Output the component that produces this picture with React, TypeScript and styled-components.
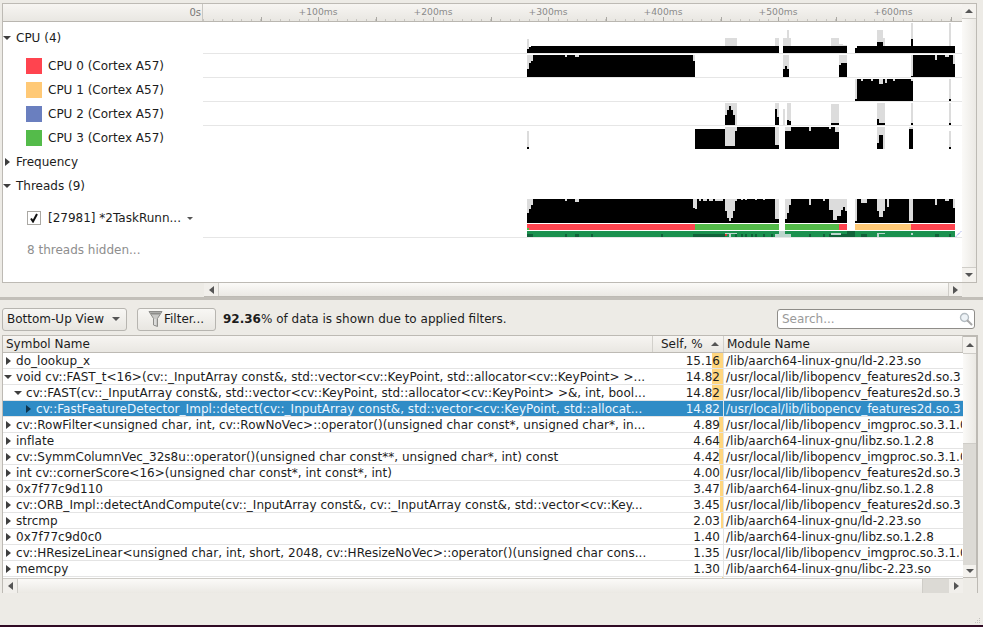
import React from "react";
import styled, { createGlobalStyle } from "styled-components";

type Shape = [string, number, number, number, number];

const GRAY = "#dcdcdc";
const BLACK = "#000";
const RED = "#ff444f";
const GREEN = "#54bb4a";
const ORANGE = "#ffc976";
const BLUE = "#6a7fbf";
const STRIP = "#1b914f";
const DARK = "#11633a";
const PALE = "#bcd6cd";

const GlobalStyle = createGlobalStyle`
  html, body {
    margin: 0;
    padding: 0;
    background: #edebe6;
  }
  * {
    box-sizing: border-box;
  }
`;

const Page = styled.div`
  position: relative;
  width: 983px;
  height: 627px;
  overflow: hidden;
  background: #edebe6;
  color: #1c1c1c;
  font-family: "DejaVu Sans", sans-serif;
  font-size: 12px;
  display: flex;
  flex-direction: column;
  padding-top: 3px;
`;

const TopPane = styled.div`
  display: flex;
  height: 280px;
  padding: 0 6px 0 2px;
`;

const TimelineFrame = styled.div`
  width: 961px;
  border: 1px solid #bdbab4;
  border-right: none;
  background: #fff;
  display: flex;
  flex-direction: column;
`;

const RulerRow = styled.div`
  display: flex;
  height: 18px;
  flex: none;
  background: linear-gradient(#f7f5f2, #e9e7e2);
  border-bottom: 1px solid #b9b6b0;
`;

const RulerLabel = styled.div`
  width: 200px;
  border-right: 1px solid #c9c7c2;
  text-align: right;
  padding: 3px 1px 0 0;
  font-size: 10px;
  color: #777;
`;

const Track = styled.div<{ $height: number }>`
  display: flex;
  height: ${(p) => p.$height}px;
  flex: none;
`;

const TrackLabel = styled.div<{ $indent?: number; $muted?: boolean }>`
  width: 200px;
  flex: none;
  display: flex;
  align-items: center;
  gap: 6px;
  padding-left: ${(p) => p.$indent ?? 0}px;
  color: ${(p) => (p.$muted ? "#8e8e8e" : "#1c1c1c")};
  white-space: nowrap;
`;

const TrackChart = styled.div<{ $line?: boolean }>`
  flex: 1;
  border-bottom: ${(p) => (p.$line ? "1px solid #e6e6e6" : "none")};
  svg {
    display: block;
  }
`;

const Swatch = styled.span<{ $color: string }>`
  width: 16px;
  height: 16px;
  margin-left: 1px;
  background: ${(p) => p.$color};
`;

const Arrow = styled.span<{ $dir: "right" | "down" | "up" | "left"; $size?: number; $color?: string }>`
  display: inline-block;
  flex: none;
  width: 0;
  height: 0;
  ${(p) => {
    const s = p.$size ?? 4;
    const c = p.$color ?? "#3e3e3e";
    if (p.$dir === "right") return `border-top: ${s}px solid transparent; border-bottom: ${s}px solid transparent; border-left: ${s + 1}px solid ${c};`;
    if (p.$dir === "left") return `border-top: ${s}px solid transparent; border-bottom: ${s}px solid transparent; border-right: ${s + 1}px solid ${c};`;
    if (p.$dir === "up") return `border-left: ${s}px solid transparent; border-right: ${s}px solid transparent; border-bottom: ${s}px solid ${c};`;
    return `border-left: ${s}px solid transparent; border-right: ${s}px solid transparent; border-top: ${s}px solid ${c};`;
  }}
`;

const GroupToggle = styled.span`
  width: 8px;
  height: 9px;
  margin-right: -1px;
  display: flex;
  align-items: center;
  justify-content: center;
`;

const CheckBox = styled.span`
  width: 14px;
  height: 14px;
  border: 1px solid #aaa8a3;
  background: #fff;
  display: flex;
  align-items: center;
  justify-content: center;
`;

const ThreadName = styled.span`
  display: flex;
  align-items: center;
  gap: 6px;
  margin-left: 1px;
`;

const VScroll = styled.div<{ $width?: number }>`
  width: ${(p) => p.$width ?? 15}px;
  flex: none;
  display: flex;
  flex-direction: column;
  background: #dcdad5;
  border: 1px solid #bdbab4;
  border-left: none;
`;

const VButton = styled.div<{ $height: number }>`
  height: ${(p) => p.$height}px;
  flex: none;
  display: flex;
  align-items: center;
  justify-content: center;
  background: #f4f2ee;
`;

const VThumb = styled.div<{ $height?: number }>`
  ${(p) => (p.$height ? `height: ${p.$height}px; flex: none;` : "flex: 1;")}
  background: linear-gradient(90deg, #fbfaf8, #ebe9e4);
  border-top: 1px solid #cfcdc8;
  border-bottom: 1px solid #cfcdc8;
`;

const VTrough = styled.div`
  flex: 1;
  background: #dcdad5;
`;

const HScrollRow = styled.div`
  display: flex;
  height: 14px;
  flex: none;
  padding: 0 21px 0 204px;
`;

const HScroll = styled.div`
  display: flex;
  flex: 1;
  background: #dcdad5;
  border-bottom: 1px solid #bdbab4;
`;

const HButton = styled.div<{ $width: number }>`
  width: ${(p) => p.$width}px;
  flex: none;
  display: flex;
  align-items: center;
  justify-content: center;
  background: #f1efeb;
`;

const HThumb = styled.div<{ $width?: number }>`
  ${(p) => (p.$width ? `width: ${p.$width}px; flex: none;` : "flex: 1;")}
  background: linear-gradient(#fbfaf8, #ebe9e4);
  border-left: 1px solid #cfcdc8;
  border-right: 1px solid #cfcdc8;
`;

const HTrough = styled.div`
  flex: 1;
  background: #dcdad5;
`;

const Splitter = styled.div`
  height: 3px;
  flex: none;
  background: #c2bfb9;
`;

const Toolbar = styled.div`
  display: flex;
  align-items: center;
  height: 35px;
  flex: none;
  padding: 3px 8px 0 2px;
`;

const ToolButton = styled.div<{ $width: number }>`
  width: ${(p) => p.$width}px;
  height: 23px;
  flex: none;
  display: flex;
  align-items: center;
  border: 1px solid #b7b5b0;
  border-radius: 3px;
  background: linear-gradient(#f8f7f4, #e8e6e1);
`;

const ComboButton = styled(ToolButton)`
  justify-content: space-between;
  padding: 0 6px 0 4px;
  margin-right: 10px;
`;

const FilterButton = styled(ToolButton)`
  padding-left: 9px;
  margin-right: 7px;
`;

const Status = styled.span`
  flex: 1;
  white-space: nowrap;
  b {
    font-weight: bold;
  }
`;

const SearchBox = styled.div`
  width: 198px;
  height: 20px;
  flex: none;
  display: flex;
  align-items: center;
  justify-content: space-between;
  padding: 0 1px 0 4px;
  background: #fff;
  border: 1px solid #8f8d89;
  border-radius: 3px;
  color: #9a9a9a;
`;

const TableFrame = styled.div`
  display: flex;
  flex-direction: column;
  width: 976px;
  height: 258px;
  flex: none;
  margin-left: 2px;
  border: 1px solid #bdbab4;
  background: #fff;
`;

const TableMain = styled.div`
  display: flex;
  height: 242px;
  flex: none;
`;

const TableColumn = styled.div`
  width: 960px;
  flex: none;
  overflow: hidden;
`;

const HeaderRow = styled.div`
  display: grid;
  grid-template-columns: 650px 71px 239px;
  height: 17px;
  background: linear-gradient(#f7f5f2, #e9e7e2);
  border-bottom: 1px solid #bdbab4;
`;

const HeaderCell = styled.div<{ $sorted?: boolean }>`
  display: flex;
  align-items: center;
  justify-content: ${(p) => (p.$sorted ? "space-between" : "flex-start")};
  padding: 0 ${(p) => (p.$sorted ? "4px" : "2px")} 0 ${(p) => (p.$sorted ? "8px" : "3px")};
  border-right: 1px solid #d2d0cb;
  white-space: nowrap;
`;

const Row = styled.div<{ $selected?: boolean }>`
  display: grid;
  grid-template-columns: 650px 71px 239px;
  height: 16px;
  border-bottom: 1px solid #e4e4e4;
  background: ${(p) => (p.$selected ? "#308cc6" : "#fff")};
  color: ${(p) => (p.$selected ? "#eaf5ff" : "#1c1c1c")};
`;

const NameCell = styled.div<{ $depth: number }>`
  display: flex;
  align-items: center;
  padding-left: ${(p) => p.$depth * 10}px;
  letter-spacing: 0.03px;
  white-space: nowrap;
  overflow: hidden;
`;

const RowToggle = styled.span`
  width: 10px;
  margin-right: 3px;
  flex: none;
  display: flex;
  align-items: center;
  justify-content: center;
`;

const SelfCell = styled.div`
  position: relative;
  display: flex;
  align-items: center;
  justify-content: flex-end;
  padding-right: 3px;
  border-right: 1px solid #e4e4e4;
`;

const SelfBar = styled.span`
  position: absolute;
  right: 0;
  top: 0;
  bottom: 0;
  background: #ffd67f;
`;

const SelfValue = styled.span`
  position: relative;
`;

const ModuleCell = styled.div`
  display: flex;
  align-items: center;
  padding-left: 2px;
  margin-right: 1px;
  white-space: nowrap;
  overflow: hidden;
`;

const TableScrollRow = styled.div`
  display: flex;
  height: 15px;
  flex: none;
  background: #edebe6;
`;

const TableHScroll = styled.div`
  width: 960px;
  display: flex;
  flex: none;
  background: #f4f2ee;
  border-top: 1px solid #cfcdc8;
`;

const Grip = styled.svg`
  position: absolute;
  right: 2px;
  bottom: 3px;
`;

const DesktopEdge = styled.div`
  position: absolute;
  left: 0;
  right: 0;
  bottom: 0;
  height: 2px;
  background: #300a24;
`;

const k = (x1: number, x2: number, y1: number, y2: number): Shape => [BLACK, x1, x2, y1, y2];
const g = (x1: number, x2: number, y1: number, y2: number): Shape => [GRAY, x1, x2, y1, y2];

const summaryShapes: Shape[] = [
  g(527, 529, 39, 49), k(527, 529, 49, 53), k(529, 531, 47, 53), k(531, 779, 46, 53),
  k(783, 847, 46, 53), k(855, 857, 48, 53), k(857, 955, 46, 53),
  g(725, 737, 38, 46), g(775, 779, 38, 46), g(783, 791, 38, 46), g(787, 789, 30, 38),
  g(831, 839, 38, 46), g(839, 843, 44, 46), g(843, 847, 45, 46),
  g(877, 885, 38, 46), g(877, 883, 30, 38), k(877, 883, 42, 46),
  g(911, 913, 23, 39), k(911, 913, 39, 46), g(949, 951, 23, 46),
];

const cpu0Shapes: Shape[] = [
  k(527, 695, 55, 77), g(527, 529, 55, 69), g(529, 531, 55, 63), g(531, 533, 55, 61),
  g(565, 567, 55, 57), g(575, 579, 55, 57), g(693, 695, 55, 61),
  g(783, 789, 55, 77), k(783, 789, 69, 77), k(785, 787, 66, 69),
  g(839, 847, 55, 77), k(839, 847, 63, 77), g(839, 841, 63, 65),
  k(911, 955, 55, 77), g(911, 913, 55, 76), g(935, 937, 55, 60), g(945, 949, 55, 57), g(953, 955, 55, 64),
];

const cpu1Shapes: Shape[] = [
  k(855, 913, 79, 101), g(855, 857, 79, 99), g(861, 863, 79, 81), g(871, 873, 79, 81),
  g(879, 883, 79, 84), g(885, 887, 79, 83), g(893, 895, 79, 81), g(911, 913, 79, 81),
  g(949, 951, 79, 99), k(949, 951, 99, 101),
];

const cpu2Shapes: Shape[] = [
  g(725, 737, 103, 125), k(725, 735, 115, 125), k(727, 733, 110, 115), k(729, 731, 106, 110),
  g(775, 779, 103, 125), k(775, 777, 109, 125), k(777, 779, 117, 125),
  g(783, 785, 109, 125), g(787, 791, 103, 125), k(787, 789, 120, 125), k(789, 791, 121, 125),
  g(831, 839, 104, 125), k(831, 839, 123, 125),
  g(877, 885, 103, 125), k(877, 885, 123, 125), k(877, 879, 119, 123),
  g(911, 913, 103, 123), k(911, 913, 123, 125), g(949, 951, 103, 123), k(949, 951, 123, 125),
];

const cpu3Shapes: Shape[] = [
  g(527, 529, 131, 147), k(527, 529, 147, 149),
  k(695, 725, 129, 149), k(725, 735, 146, 149), g(725, 735, 127, 146), k(735, 779, 127, 149),
  g(735, 737, 127, 131), g(775, 779, 127, 145), k(775, 779, 145, 149),
  k(785, 839, 127, 149), g(785, 791, 127, 131), g(809, 811, 127, 131), g(829, 831, 127, 129), g(835, 839, 127, 132),
  g(877, 885, 127, 149), k(879, 883, 135, 149), k(877, 879, 143, 149),
  g(909, 913, 127, 129), k(909, 913, 129, 149),
  g(949, 951, 131, 147), k(949, 951, 147, 149),
];

const threadShapes: Shape[] = [
  k(527, 779, 199, 223), k(785, 847, 199, 223), k(855, 955, 199, 223),
  g(527, 529, 199, 213), g(529, 531, 199, 209), g(531, 533, 199, 205),
  g(565, 567, 199, 201), g(575, 579, 199, 202),
  g(693, 697, 199, 208), g(695, 697, 208, 209), g(699, 701, 199, 201), g(703, 707, 199, 201),
  g(709, 713, 199, 201), g(715, 723, 199, 201),
  g(725, 735, 199, 211), g(727, 733, 211, 218), g(729, 731, 218, 221), g(735, 737, 199, 201),
  g(741, 743, 199, 200), g(745, 747, 199, 200), g(755, 757, 199, 200), g(763, 765, 199, 200),
  g(775, 779, 199, 219),
  g(785, 787, 199, 219), g(787, 789, 199, 213), g(789, 791, 199, 205),
  g(809, 811, 199, 205), g(823, 825, 199, 201),
  g(829, 833, 199, 210), g(833, 837, 199, 220), g(837, 841, 199, 216), g(841, 843, 199, 210),
  g(843, 845, 199, 207), g(845, 847, 199, 211),
  g(855, 857, 199, 221), g(861, 867, 199, 203), g(877, 885, 199, 211), g(879, 883, 211, 217),
  g(887, 889, 199, 207), g(909, 913, 199, 221), g(935, 937, 199, 205), g(945, 949, 199, 201), g(953, 955, 199, 208),
  [RED, 527, 695, 224, 230], [GREEN, 527, 529, 228, 230], [GREEN, 695, 779, 224, 230],
  [GREEN, 785, 839, 224, 230], [RED, 839, 847, 224, 230], [ORANGE, 855, 911, 224, 230], [RED, 911, 955, 224, 230],
  [STRIP, 527, 779, 231, 237], [STRIP, 785, 847, 231, 237], [DARK, 847, 855, 231, 237], [STRIP, 855, 955, 231, 237],
  [PALE, 779, 785, 231, 234], [PALE, 775, 791, 234, 237], [DARK, 847, 855, 234, 237],
  [DARK, 527, 533, 234, 237], [DARK, 565, 567, 234, 237], [DARK, 575, 579, 234, 237], [DARK, 591, 593, 234, 237],
  [DARK, 661, 663, 234, 237], [DARK, 693, 725, 234, 237], ["#d33", 725, 727, 234, 236],
  [PALE, 725, 737, 233, 234], [PALE, 729, 731, 234, 237], [DARK, 735, 737, 234, 237],
  [DARK, 741, 743, 234, 237], [DARK, 745, 747, 234, 237], [DARK, 751, 753, 234, 237], [DARK, 755, 757, 234, 237],
  [DARK, 763, 765, 234, 237], [DARK, 771, 773, 234, 237],
  [DARK, 809, 811, 234, 237], [DARK, 823, 825, 234, 237], [DARK, 829, 847, 234, 237], [PALE, 831, 841, 233, 235],
  [DARK, 861, 867, 234, 237], [PALE, 877, 885, 233, 234], [PALE, 877, 879, 234, 237],
  [PALE, 911, 913, 233, 235], [DARK, 935, 939, 234, 237], [DARK, 949, 951, 234, 237],
];

const TrackCanvas = ({ top, height, shapes, extra }: { top: number; height: number; shapes: Shape[]; extra?: React.ReactNode }) => (
  <svg width={759} height={height} viewBox={`203 ${top} 759 ${height}`} shapeRendering="crispEdges">
    {shapes.map(([fill, x1, x2, y1, y2], i) => (
      <rect key={i} x={x1} y={y1} width={x2 - x1} height={y2 - y1} fill={fill} />
    ))}
    {extra}
  </svg>
);

const Ruler = () => {
  const minor = Array.from({ length: 79 }, (_, i) => 203 + i * 9.583);
  const major = Array.from({ length: 14 }, (_, i) => 203 + i * 57.5);
  return (
    <svg width={759} height={17} viewBox="203 4 759 17" shapeRendering="crispEdges">
      {minor.map((x) => (
        <rect key={x} x={Math.round(x)} y={19} width={1} height={2} fill="#c8c6c1" />
      ))}
      {major.slice(1).map((x) => (
        <rect key={x} x={Math.round(x)} y={17} width={1} height={4} fill="#aaa8a3" />
      ))}
      {[1, 2, 3, 4, 5, 6].map((n) => (
        <text
          key={n}
          x={203 + n * 115}
          y={15}
          textAnchor="middle"
          fontFamily="'DejaVu Sans', sans-serif"
          fontSize="9.2"
          fill="#8a8a8a"
          shapeRendering="auto"
        >
          +{n}00ms
        </text>
      ))}
    </svg>
  );
};

interface SymbolRow {
  name: string;
  self: number;
  module: string;
  depth?: number;
  open?: boolean;
  selected?: boolean;
}

const LD = "/lib/aarch64-linux-gnu/ld-2.23.so";
const LIBZ = "/lib/aarch64-linux-gnu/libz.so.1.2.8";
const FEATURES = "/usr/local/lib/libopencv_features2d.so.3";
const IMGPROC = "/usr/local/lib/libopencv_imgproc.so.3.1.0";

const rows: SymbolRow[] = [
  { name: "do_lookup_x", self: 15.16, module: LD },
  { name: "void cv::FAST_t<16>(cv::_InputArray const&, std::vector<cv::KeyPoint, std::allocator<cv::KeyPoint> >...", self: 14.82, module: FEATURES, open: true },
  { name: "cv::FAST(cv::_InputArray const&, std::vector<cv::KeyPoint, std::allocator<cv::KeyPoint> >&, int, bool...", self: 14.82, module: FEATURES, depth: 1, open: true },
  { name: "cv::FastFeatureDetector_Impl::detect(cv::_InputArray const&, std::vector<cv::KeyPoint, std::allocat...", self: 14.82, module: FEATURES, depth: 2, selected: true },
  { name: "cv::RowFilter<unsigned char, int, cv::RowNoVec>::operator()(unsigned char const*, unsigned char*, in...", self: 4.89, module: IMGPROC },
  { name: "inflate", self: 4.64, module: LIBZ },
  { name: "cv::SymmColumnVec_32s8u::operator()(unsigned char const**, unsigned char*, int) const", self: 4.42, module: IMGPROC },
  { name: "int cv::cornerScore<16>(unsigned char const*, int const*, int)", self: 4.0, module: FEATURES },
  { name: "0x7f77c9d110", self: 3.47, module: LIBZ },
  { name: "cv::ORB_Impl::detectAndCompute(cv::_InputArray const&, cv::_InputArray const&, std::vector<cv::Key...", self: 3.45, module: FEATURES },
  { name: "strcmp", self: 2.03, module: LD },
  { name: "0x7f77c9d0c0", self: 1.4, module: LIBZ },
  { name: "cv::HResizeLinear<unsigned char, int, short, 2048, cv::HResizeNoVec>::operator()(unsigned char cons...", self: 1.35, module: IMGPROC },
  { name: "memcpy", self: 1.3, module: "/lib/aarch64-linux-gnu/libc-2.23.so" },
];

const cpus = [
  { label: "CPU 0 (Cortex A57)", color: RED, top: 54, shapes: cpu0Shapes },
  { label: "CPU 1 (Cortex A57)", color: ORANGE, top: 78, shapes: cpu1Shapes },
  { label: "CPU 2 (Cortex A57)", color: BLUE, top: 102, shapes: cpu2Shapes },
  { label: "CPU 3 (Cortex A57)", color: GREEN, top: 126, shapes: cpu3Shapes },
];

const barWidth = (self: number) => (self < 1.5 ? 0 : Math.ceil((self / 15.16) * 11));

const FunnelIcon = () => (
  <svg width="17" height="18" viewBox="0 0 17 18">
    <path d="M2 1.500h13l-4.500 7v8l-4-1.500V8.500z" fill="#c9c9c6" stroke="#8c8c89" strokeWidth="1" />
    <path d="M3 2.500h11l-1.500 2h-8z" fill="#8d8d8a" />
    <path d="M8 9v6" stroke="#eee" strokeWidth="1" />
  </svg>
);

const SearchIcon = () => (
  <svg width="14" height="14" viewBox="0 0 14 14">
    <circle cx="5.500" cy="5.500" r="4" fill="#eef3f7" stroke="#b4bcc2" strokeWidth="1.400" />
    <path d="M8.500 8.500l4 4" stroke="#a9a9a9" strokeWidth="2" strokeLinecap="round" />
  </svg>
);

const App: React.FC = () => {
  return (
    <Page>
      <GlobalStyle />
      <TopPane>
        <TimelineFrame>
          <RulerRow>
            <RulerLabel>0s</RulerLabel>
            <Ruler />
          </RulerRow>
          <Track $height={32}>
            <TrackLabel>
              <GroupToggle><Arrow $dir="down" /></GroupToggle>
              CPU (4)
            </TrackLabel>
            <TrackChart $line>
              <TrackCanvas top={22} height={31} shapes={summaryShapes} />
            </TrackChart>
          </Track>
          {cpus.map((cpu, i) => (
            <Track $height={24} key={cpu.label}>
              <TrackLabel $indent={22}>
                <Swatch $color={cpu.color} />
                {cpu.label}
              </TrackLabel>
              <TrackChart $line={i < 3}>
                <TrackCanvas top={cpu.top} height={i < 3 ? 23 : 24} shapes={cpu.shapes} />
              </TrackChart>
            </Track>
          ))}
          <Track $height={24}>
            <TrackLabel>
              <GroupToggle><Arrow $dir="right" /></GroupToggle>
              Frequency
            </TrackLabel>
          </Track>
          <Track $height={24}>
            <TrackLabel>
              <GroupToggle><Arrow $dir="down" /></GroupToggle>
              Threads (9)
            </TrackLabel>
          </Track>
          <Track $height={40}>
            <TrackLabel $indent={24}>
              <CheckBox>
                <svg width="10" height="10" viewBox="0 0 10 10">
                  <path d="M2 5.500l2 3L8 1" fill="none" stroke="#111" strokeWidth="2" />
                </svg>
              </CheckBox>
              <ThreadName>
                [27981] *2TaskRunn...
                <Arrow $dir="down" $size={3} $color="#555" />
              </ThreadName>
            </TrackLabel>
            <TrackChart $line>
              <TrackCanvas
                top={198}
                height={39}
                shapes={threadShapes}
                extra={<path d="M956 236.500l5-5" stroke="#5566dd" strokeDasharray="1 1" fill="none" shapeRendering="auto" />}
              />
            </TrackChart>
          </Track>
          <Track $height={24}>
            <TrackLabel $indent={24} $muted>8 threads hidden...</TrackLabel>
          </Track>
        </TimelineFrame>
        <VScroll>
          <VButton $height={14}><Arrow $dir="up" $size={4} $color="#555" /></VButton>
          <VThumb />
          <VButton $height={14}><Arrow $dir="down" $size={4} $color="#555" /></VButton>
        </VScroll>
      </TopPane>
      <HScrollRow>
        <HScroll>
          <HButton $width={14}><Arrow $dir="left" $size={4} $color="#555" /></HButton>
          <HThumb />
          <HButton $width={13}><Arrow $dir="right" $size={4} $color="#555" /></HButton>
        </HScroll>
      </HScrollRow>
      <Splitter />
      <Toolbar>
        <ComboButton $width={125}>
          Bottom-Up View
          <Arrow $dir="down" $size={4} $color="#555" />
        </ComboButton>
        <FilterButton $width={79}>
          <FunnelIcon />
          Filter...
        </FilterButton>
        <Status><b>92.36</b>% of data is shown due to applied filters.</Status>
        <SearchBox>
          Search...
          <SearchIcon />
        </SearchBox>
      </Toolbar>
      <TableFrame>
        <TableMain>
          <TableColumn>
            <HeaderRow>
              <HeaderCell>Symbol Name</HeaderCell>
              <HeaderCell $sorted>
                Self, %
                <Arrow $dir="up" $size={4} $color="#555" />
              </HeaderCell>
              <HeaderCell>Module Name</HeaderCell>
            </HeaderRow>
            {rows.map((row) => (
              <Row key={row.name} $selected={row.selected}>
                <NameCell $depth={row.depth ?? 0}>
                  <RowToggle>
                    <Arrow
                      $dir={row.open ? "down" : "right"}
                      $color={row.selected ? "#10344c" : "#3e3e3e"}
                    />
                  </RowToggle>
                  {row.name}
                </NameCell>
                <SelfCell>
                  {!row.selected && <SelfBar style={{ width: `${barWidth(row.self)}px` }} />}
                  <SelfValue>{row.self.toFixed(2)}</SelfValue>
                </SelfCell>
                <ModuleCell>{row.module}</ModuleCell>
              </Row>
            ))}
            <Row>
              <NameCell $depth={0} />
              <SelfCell><SelfBar style={{ width: "1px" }} /></SelfCell>
              <ModuleCell />
            </Row>
          </TableColumn>
          <VScroll $width={14}>
            <VButton $height={16}><Arrow $dir="up" $size={4} $color="#555" /></VButton>
            <VThumb $height={91} />
            <VTrough />
            <VButton $height={12}><Arrow $dir="down" $size={4} $color="#555" /></VButton>
          </VScroll>
        </TableMain>
        <TableScrollRow>
          <TableHScroll>
            <HButton $width={14}><Arrow $dir="left" $size={4} $color="#555" /></HButton>
            <HThumb $width={906} />
            <HTrough />
            <HButton $width={14}><Arrow $dir="right" $size={4} $color="#555" /></HButton>
          </TableHScroll>
        </TableScrollRow>
      </TableFrame>
      <Grip width="7" height="6" viewBox="0 0 7 6">
        <path d="M5 0h1v1H5zM3 2h1v1H3zM5 2h1v1H5zM1 4h1v1H1zM3 4h1v1H3zM5 4h1v1H5z" fill="#c4c2bd" />
      </Grip>
      <DesktopEdge />
    </Page>
  );
};

export default App;
